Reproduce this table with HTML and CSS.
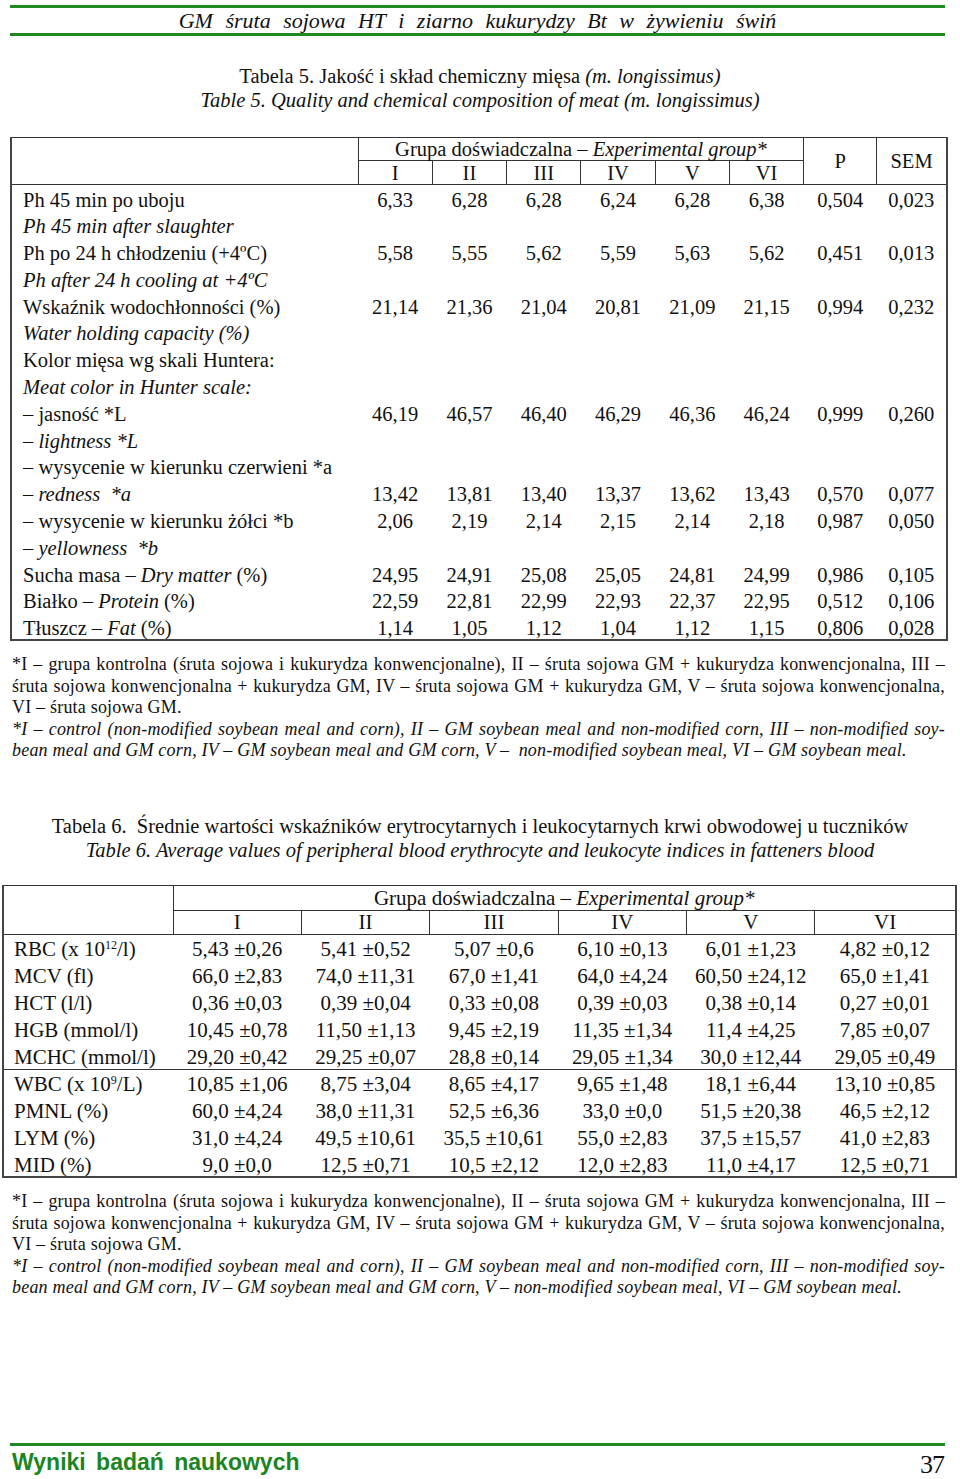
FILE: index.html
```html
<!DOCTYPE html>
<html lang="pl">
<head>
<meta charset="utf-8">
<title>GM śruta sojowa HT i ziarno kukurydzy Bt w żywieniu świń</title>
<link rel="stylesheet" href="styles.css">
</head>
<body>
<div class="page">
  <header class="running-head">GM śruta sojowa HT i ziarno kukurydzy Bt w żywieniu świń</header>

  <div class="caption cap5">
    <div>Tabela 5. Jakość i skład chemiczny mięsa <i>(m. longissimus)</i></div>
    <div><i>Table 5. Quality and chemical composition of meat (m. longissimus)</i></div>
  </div>

  <table class="t5">
    <colgroup>
      <col class="c-label"><col class="c-g"><col class="c-g"><col class="c-g"><col class="c-g"><col class="c-g"><col class="c-g"><col class="c-p"><col class="c-sem">
    </colgroup>
    <thead>
      <tr class="h1">
        <th rowspan="2" class="lab-h"></th>
        <th colspan="6" class="grp">Grupa doświadczalna – <i>Experimental group*</i></th>
        <th rowspan="2" class="ps">P</th>
        <th rowspan="2" class="ps last">SEM</th>
      </tr>
      <tr class="h2">
        <th class="sub">I</th><th class="sub">II</th><th class="sub">III</th><th class="sub">IV</th><th class="sub">V</th><th class="sub">VI</th>
      </tr>
    </thead>
    <tbody>
      <tr><td class="lab">Ph 45 min po uboju</td><td>6,33</td><td>6,28</td><td>6,28</td><td>6,24</td><td>6,28</td><td>6,38</td><td>0,504</td><td>0,023</td></tr>
      <tr><td class="lab"><i>Ph 45 min after slaughter</i></td><td></td><td></td><td></td><td></td><td></td><td></td><td></td><td></td></tr>
      <tr><td class="lab">Ph po 24 h chłodzeniu (+4ºC)</td><td>5,58</td><td>5,55</td><td>5,62</td><td>5,59</td><td>5,63</td><td>5,62</td><td>0,451</td><td>0,013</td></tr>
      <tr><td class="lab"><i>Ph after 24 h cooling at +4ºC</i></td><td></td><td></td><td></td><td></td><td></td><td></td><td></td><td></td></tr>
      <tr><td class="lab">Wskaźnik wodochłonności (%)</td><td>21,14</td><td>21,36</td><td>21,04</td><td>20,81</td><td>21,09</td><td>21,15</td><td>0,994</td><td>0,232</td></tr>
      <tr><td class="lab"><i>Water holding capacity (%)</i></td><td></td><td></td><td></td><td></td><td></td><td></td><td></td><td></td></tr>
      <tr><td class="lab">Kolor mięsa wg skali Huntera:</td><td></td><td></td><td></td><td></td><td></td><td></td><td></td><td></td></tr>
      <tr><td class="lab"><i>Meat color in Hunter scale:</i></td><td></td><td></td><td></td><td></td><td></td><td></td><td></td><td></td></tr>
      <tr><td class="lab">– jasność *L</td><td>46,19</td><td>46,57</td><td>46,40</td><td>46,29</td><td>46,36</td><td>46,24</td><td>0,999</td><td>0,260</td></tr>
      <tr><td class="lab"><i>– lightness *L</i></td><td></td><td></td><td></td><td></td><td></td><td></td><td></td><td></td></tr>
      <tr><td class="lab">– wysycenie w kierunku czerwieni *a</td><td></td><td></td><td></td><td></td><td></td><td></td><td></td><td></td></tr>
      <tr><td class="lab"><i>– redness &nbsp;*a</i></td><td>13,42</td><td>13,81</td><td>13,40</td><td>13,37</td><td>13,62</td><td>13,43</td><td>0,570</td><td>0,077</td></tr>
      <tr><td class="lab">– wysycenie w kierunku żółci *b</td><td>2,06</td><td>2,19</td><td>2,14</td><td>2,15</td><td>2,14</td><td>2,18</td><td>0,987</td><td>0,050</td></tr>
      <tr><td class="lab"><i>– yellowness &nbsp;*b</i></td><td></td><td></td><td></td><td></td><td></td><td></td><td></td><td></td></tr>
      <tr><td class="lab">Sucha masa – <i>Dry matter</i> (%)</td><td>24,95</td><td>24,91</td><td>25,08</td><td>25,05</td><td>24,81</td><td>24,99</td><td>0,986</td><td>0,105</td></tr>
      <tr><td class="lab">Białko – <i>Protein</i> (%)</td><td>22,59</td><td>22,81</td><td>22,99</td><td>22,93</td><td>22,37</td><td>22,95</td><td>0,512</td><td>0,106</td></tr>
      <tr><td class="lab">Tłuszcz – <i>Fat</i> (%)</td><td>1,14</td><td>1,05</td><td>1,12</td><td>1,04</td><td>1,12</td><td>1,15</td><td>0,806</td><td>0,028</td></tr>
    </tbody>
  </table>

  <div class="note">
    <div class="jl">*I – grupa kontrolna (śruta sojowa i kukurydza konwencjonalne), II – śruta sojowa GM + kukurydza konwencjonalna, III –</div>
    <div class="jl">śruta sojowa konwencjonalna + kukurydza GM, IV – śruta sojowa GM + kukurydza GM, V – śruta sojowa konwencjonalna,</div>
    <div>VI – śruta sojowa GM.</div>
    <div class="jl"><i>*I – control (non-modified soybean meal and corn), II – GM soybean meal and non-modified corn, III – non-modified soy-</i></div>
    <div><i>bean meal and GM corn, IV – GM soybean meal and GM corn, V – &nbsp;non-modified soybean meal, VI – GM soybean meal.</i></div>
  </div>

  <div class="caption cap6">
    <div>Tabela 6. &nbsp;Średnie wartości wskaźników erytrocytarnych i leukocytarnych krwi obwodowej u tuczników</div>
    <div><i>Table 6. Average values of peripheral blood erythrocyte and leukocyte indices in fatteners blood</i></div>
  </div>

  <table class="t6">
    <colgroup>
      <col class="d-label"><col class="d-g"><col class="d-g"><col class="d-g"><col class="d-g"><col class="d-g"><col class="d-last">
    </colgroup>
    <thead>
      <tr class="h1">
        <th rowspan="2" class="lab-h"></th>
        <th colspan="6" class="grp">Grupa doświadczalna – <i>Experimental group*</i></th>
      </tr>
      <tr class="h2">
        <th class="sub">I</th><th class="sub">II</th><th class="sub">III</th><th class="sub">IV</th><th class="sub">V</th><th class="sub last">VI</th>
      </tr>
    </thead>
    <tbody>
      <tr><td class="lab">RBC (x 10<sup>12</sup>/l)</td><td>5,43 ±0,26</td><td>5,41 ±0,52</td><td>5,07 ±0,6</td><td>6,10 ±0,13</td><td>6,01 ±1,23</td><td>4,82 ±0,12</td></tr>
      <tr><td class="lab">MCV (fl)</td><td>66,0 ±2,83</td><td>74,0 ±11,31</td><td>67,0 ±1,41</td><td>64,0 ±4,24</td><td>60,50 ±24,12</td><td>65,0 ±1,41</td></tr>
      <tr><td class="lab">HCT (l/l)</td><td>0,36 ±0,03</td><td>0,39 ±0,04</td><td>0,33 ±0,08</td><td>0,39 ±0,03</td><td>0,38 ±0,14</td><td>0,27 ±0,01</td></tr>
      <tr><td class="lab">HGB (mmol/l)</td><td>10,45 ±0,78</td><td>11,50 ±1,13</td><td>9,45 ±2,19</td><td>11,35 ±1,34</td><td>11,4 ±4,25</td><td>7,85 ±0,07</td></tr>
      <tr class="sep"><td class="lab">MCHC (mmol/l)</td><td>29,20 ±0,42</td><td>29,25 ±0,07</td><td>28,8 ±0,14</td><td>29,05 ±1,34</td><td>30,0 ±12,44</td><td>29,05 ±0,49</td></tr>
      <tr><td class="lab">WBC (x 10<sup>9</sup>/L)</td><td>10,85 ±1,06</td><td>8,75 ±3,04</td><td>8,65 ±4,17</td><td>9,65 ±1,48</td><td>18,1 ±6,44</td><td>13,10 ±0,85</td></tr>
      <tr><td class="lab">PMNL (%)</td><td>60,0 ±4,24</td><td>38,0 ±11,31</td><td>52,5 ±6,36</td><td>33,0 ±0,0</td><td>51,5 ±20,38</td><td>46,5 ±2,12</td></tr>
      <tr><td class="lab">LYM (%)</td><td>31,0 ±4,24</td><td>49,5 ±10,61</td><td>35,5 ±10,61</td><td>55,0 ±2,83</td><td>37,5 ±15,57</td><td>41,0 ±2,83</td></tr>
      <tr><td class="lab">MID (%)</td><td>9,0 ±0,0</td><td>12,5 ±0,71</td><td>10,5 ±2,12</td><td>12,0 ±2,83</td><td>11,0 ±4,17</td><td>12,5 ±0,71</td></tr>
    </tbody>
  </table>

  <div class="note note2">
    <div class="jl">*I – grupa kontrolna (śruta sojowa i kukurydza konwencjonalne), II – śruta sojowa GM + kukurydza konwencjonalna, III –</div>
    <div class="jl">śruta sojowa konwencjonalna + kukurydza GM, IV – śruta sojowa GM + kukurydza GM, V – śruta sojowa konwencjonalna,</div>
    <div>VI – śruta sojowa GM.</div>
    <div class="jl"><i>*I – control (non-modified soybean meal and corn), II – GM soybean meal and non-modified corn, III – non-modified soy-</i></div>
    <div><i>bean meal and GM corn, IV – GM soybean meal and GM corn, V – non-modified soybean meal, VI – GM soybean meal.</i></div>
  </div>

  <footer class="running-foot">
    <span class="foot-title">Wyniki badań naukowych</span>
    <span class="folio">37</span>
  </footer>
</div>
</body>
</html>
```

FILE: styles.css
```css
* { box-sizing: border-box; }

html, body {
  margin: 0;
  padding: 0;
  background: #fff;
}

body {
  font-family: "Liberation Serif", "Times New Roman", serif;
  color: #111;
}

.page {
  width: 960px;
  height: 1479px;
  display: flex;
  flex-direction: column;
}

.running-head {
  margin: 5px 15px 0 10px;
  height: 31px;
  border-top: 3px solid #1f8a24;
  border-bottom: 3px solid #1f8a24;
  text-align: center;
  font-style: italic;
  font-size: 22px;
  line-height: 25px;
  word-spacing: 7px;
}

.caption {
  text-align: center;
  font-size: 20.5px;
  line-height: 24px;
}

.cap5 { margin-top: 28px; }
.cap6 { margin-top: 52px; }

table {
  border-collapse: collapse;
  font-size: 20.5px;
  line-height: 22px;
  table-layout: fixed;
}

th, td {
  padding: 0;
  font-weight: normal;
  text-align: center;
  vertical-align: middle;
  white-space: nowrap;
}

/* ---- Table 5 ---- */
.t5 {
  margin: 25px 0 0 10px;
  width: 936px;
  border-top: 1px solid #333;
  border-left: 2px solid #444;
  border-right: 2px solid #444;
  border-bottom: 2px solid #444;
}

.c-label { width: 347px; }
.c-g { width: 74.3px; }
.c-p { width: 73px; }
.c-sem { width: 70px; }

.t5 .h1 th { height: 23px; }
.t5 .h2 th { height: 24px; }

.t5 .lab-h { border-right: 1px solid #333; }
.t5 .grp { border-bottom: 1px solid #333; }
.t5 .sub { border-right: 1px solid #333; }
.t5 .ps { border-left: 1px solid #333; }
.t5 thead tr.h2 th,
.t5 thead .ps,
.t5 thead .lab-h { border-bottom: 1px solid #333; }

.t5 tbody td {
  height: 26.8px;
  padding-top: 3px;
}

.lab {
  text-align: left;
  padding-left: 11px;
}

/* ---- Notes ---- */
.note {
  margin: 13px 15px 0 12px;
  font-size: 18px;
  line-height: 21.5px;
  letter-spacing: 0.2px;
}

.jl {
  text-align: justify;
  text-align-last: justify;
  word-spacing: -3px;
}

/* ---- Table 6 ---- */
.t6 {
  margin: 23px 0 0 2px;
  width: 953px;
  font-size: 21px;
  border-top: 1px solid #333;
  border-left: 2px solid #444;
  border-right: 2px solid #444;
  border-bottom: 2px solid #444;
}

.d-label { width: 170px; }
.d-g { width: 128.4px; }
.d-last { width: 141px; }

.t6 .h1 th { height: 25px; }
.t6 .h2 th { height: 24px; }

.t6 .lab-h { border-right: 1px solid #333; border-bottom: 1px solid #333; }
.t6 .grp { border-bottom: 1px solid #333; }
.t6 .sub { border-right: 1px solid #333; border-bottom: 1px solid #333; }
.t6 .sub.last { border-right: none; }

.t6 tbody td {
  height: 27px;
  padding-top: 3px;
}
.t6 .lab { padding-left: 10px; }
.t6 tr.sep td { border-bottom: 1px solid #333; }

sup {
  font-size: 12px;
  line-height: 0;
  vertical-align: 7px;
}

/* ---- Footer ---- */
.running-foot {
  margin: auto 15px 0 10px;
  height: 36px;
  border-top: 3px solid #1f8a24;
  display: flex;
  justify-content: space-between;
  align-items: center;
  padding: 0 1px 0 2px;
}

.foot-title {
  font-family: "Liberation Sans", Arial, sans-serif;
  font-weight: bold;
  color: #1b8521;
  font-size: 23px;
  word-spacing: 4px;
}

.folio {
  font-family: "Liberation Serif", "Times New Roman", serif;
  font-size: 26px;
  margin-top: 4px;
  letter-spacing: -1px;
}
```
